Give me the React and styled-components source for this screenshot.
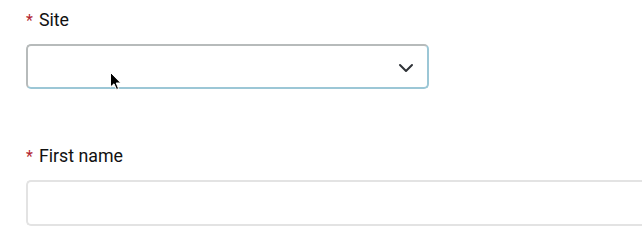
import React from 'react'
import styled, { createGlobalStyle } from 'styled-components'

const GlobalStyle = createGlobalStyle`
    body {
        margin: 0;
        background: #ffffff;
        font-family: Roboto, "Liberation Sans", sans-serif;
        overflow: hidden;
    }
`;

const Form = styled.form`
    position: relative;
    display: flex;
    flex-direction: column;
    gap: ${p => p.gap}px;
    padding: 8px 0 0 26px;
`;

const Field = styled.div`
    display: flex;
    flex-direction: column;
    gap: 12px;
`;

const Label = styled.label`
    display: flex;
    align-items: baseline;
    gap: 6px;
    font-size: 17.8px;
    line-height: 24px;
    color: #111;
`;

const Required = styled.span`
    color: #b32630;
    font-size: 16px;
    line-height: 20px;
`;

const SelectBox = styled.div`
    box-sizing: border-box;
    display: flex;
    align-items: center;
    justify-content: flex-end;
    width: 403px;
    height: 45px;
    padding: 2px 13px 0 0;
    border: 2px solid #b7bbbb;
    border-right-color: #9cc7d6;
    border-bottom-color: #9cc7d6;
    border-radius: 5px;
    background: #fff;
`;

const Input = styled.input`
    box-sizing: border-box;
    width: 100%;
    height: 46px;
    border: 2px solid #e3e3e3;
    border-right: none;
    border-radius: 5px 0 0 5px;
    background: #fff;
    outline: none;
`;

// mouse pointer lying over the select
const Cursor = styled.svg`
    position: absolute;
    left: 110px;
    top: 72px;
`;

const App = () => {
    return (
        <>
            <GlobalStyle />
            <Form gap={55}>
                <Field>
                    <Label><Required>*</Required>Site</Label>
                    <SelectBox>
                        <svg width="16" height="10" viewBox="0 0 16 10" fill="none">
                            <path d="M2 2 L8 8 L14 2" stroke="#2f3338" strokeWidth="2" strokeLinecap="round" strokeLinejoin="round" />
                        </svg>
                    </SelectBox>
                </Field>
                <Field>
                    <Label><Required>*</Required>First name</Label>
                    <Input type="text" />
                </Field>
                <Cursor width="12" height="19" viewBox="0 0 12 19">
                    <path d="M0.5 0.5 L0.5 15 L4 11.8 L6.5 17.5 L8.6 16.6 L6.2 11 L10.8 11 Z" fill="#000" stroke="#fff" strokeWidth="1" />
                </Cursor>
            </Form>
        </>
    )
}

export default App
